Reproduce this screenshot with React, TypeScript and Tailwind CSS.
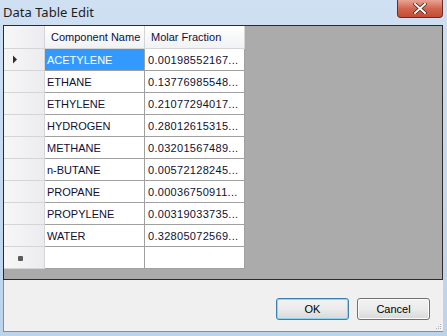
const rows: [string, string][] = [
  ['ACETYLENE', '0.00198552167...'],
  ['ETHANE', '0.13776985548...'],
  ['ETHYLENE', '0.21077294017...'],
  ['HYDROGEN', '0.28012615315...'],
  ['METHANE', '0.03201567489...'],
  ['n-BUTANE', '0.00572128245...'],
  ['PROPANE', '0.00036750911...'],
  ['PROPYLENE', '0.00319033735...'],
  ['WATER', '0.32805072569...'],
]

function RowHeader({ mark }: { mark?: 'arrow' | 'star' }) {
  return (
    <div className="w-[41px] h-[22px] shrink-0 border-r border-b border-[#d5d5d5] bg-gradient-to-r from-[#f7f7f7] to-[#ececf0] flex items-center pl-[8px]">
      {mark === 'arrow' && (
        <svg width="6" height="9" viewBox="0 0 6 9">
          <path d="M1 0.5 L5 4.5 L1 8.5 Z" fill="#3a2a2a" />
        </svg>
      )}
      {mark === 'star' && <div className="ml-[6px] mt-[2px] w-[5px] h-[5px] rounded-[1px] bg-[#5a5a5a]" />}
    </div>
  )
}

function Button({ label, focused }: { label: string; focused?: boolean }) {
  return (
    <button
      className={
        'w-[73px] h-[22px] rounded-[3px] border text-[11px] text-black bg-gradient-to-b from-[#f2f2f2] via-[#ebebeb] to-[#d9d9d9] ' +
        (focused ? 'border-[#3c7fb1] shadow-[inset_0_0_0_1px_#8fd4f3]' : 'border-[#707070] shadow-[inset_0_0_0_1px_#fcfcfc]')
      }
    >
      {label}
    </button>
  )
}

export default function App() {
  return (
    <div className="w-[447px] h-[336px] bg-gradient-to-b from-[#cfe0f2] to-[#bcd3ec] flex flex-col font-['Liberation_Sans',sans-serif] text-[11px]">
      {/* title bar */}
      <div className="h-[25px] shrink-0 flex items-start justify-between pl-[3px] pr-[4px]">
        <span className="mt-[4px] text-[13px] text-[#1e1e1e] font-['Noto_Sans',sans-serif] leading-[16px]">Data Table Edit</span>
        <div className="w-[46px] h-[18px] rounded-b-[4px] border border-t-0 border-[#6a2d22] bg-gradient-to-b from-[#e8a493] via-[#d2654f] to-[#c44c34] flex items-center justify-center">
          <svg width="14" height="11" viewBox="0 0 14 11">
            <path d="M2 1 L12 10 M12 1 L2 10" stroke="#4a1a12" strokeWidth="3.4" strokeLinecap="square" />
            <path d="M2 1 L12 10 M12 1 L2 10" stroke="#ffffff" strokeWidth="2" strokeLinecap="square" />
          </svg>
        </div>
      </div>

      {/* client area */}
      <div className="ml-[3px] mr-[4px] h-[307px] bg-[#f0f0f0] border-l border-b border-[#8c8c8c] flex flex-col">
        <div className="h-[255px] shrink-0 border border-[#2b2b2b] bg-[#ababab] -ml-px">
          <div className="w-[241px] bg-white">
            {/* header */}
            <div className="flex h-[23px]">
              <div className="w-[41px] border-r border-b border-[#d5d5d5] bg-gradient-to-r from-[#f7f7f7] to-[#ececf0]" />
              <div className="w-[100px] border-r border-b border-[#d5d5d5] bg-gradient-to-b from-white to-[#f1f2f4] pl-[6px] pt-[1px] flex items-center text-[#101040]">
                Component Name
              </div>
              <div className="w-[100px] border-r border-b border-[#d5d5d5] bg-gradient-to-b from-white to-[#f1f2f4] pl-[6px] pt-[1px] flex items-center text-[#101040]">
                Molar Fraction
              </div>
            </div>
            {rows.map(([name, val], i) => (
              <div key={name} className="flex h-[22px]">
                <RowHeader mark={i === 0 ? 'arrow' : undefined} />
                <div
                  className={
                    'w-[100px] border-r border-b border-[#a0a0a0] pl-[2px] pt-[1px] flex items-center ' +
                    (i === 0 ? 'bg-[#3399ff] text-white' : 'bg-white text-[#101030]')
                  }
                >
                  {name}
                </div>
                <div className="w-[100px] border-r border-b border-[#a0a0a0] pl-[3px] pt-[1px] flex items-center text-[#101030] tracking-[0.3px]">
                  {val}
                </div>
              </div>
            ))}
            <div className="flex h-[22px]">
              <RowHeader mark="star" />
              <div className="w-[100px] border-r border-b border-[#a0a0a0]" />
              <div className="w-[100px] border-r border-b border-[#a0a0a0]" />
            </div>
          </div>
        </div>

        {/* buttons */}
        <div className="flex-1 relative flex justify-end items-start pt-[18px] pr-[13px] gap-[8px]">
          <Button label="OK" focused />
          <Button label="Cancel" />
          <div className="absolute right-[2px] bottom-[2px] grid grid-cols-3 gap-[1px]">
            {[0, 0, 1, 0, 1, 1, 1, 1, 1].map((v, k) => (
              <div key={k} className={'w-[1px] h-[1px] ' + (v ? 'bg-[#b0b0b0]' : 'bg-transparent')} />
            ))}
          </div>
        </div>
      </div>
    </div>
  )
}
